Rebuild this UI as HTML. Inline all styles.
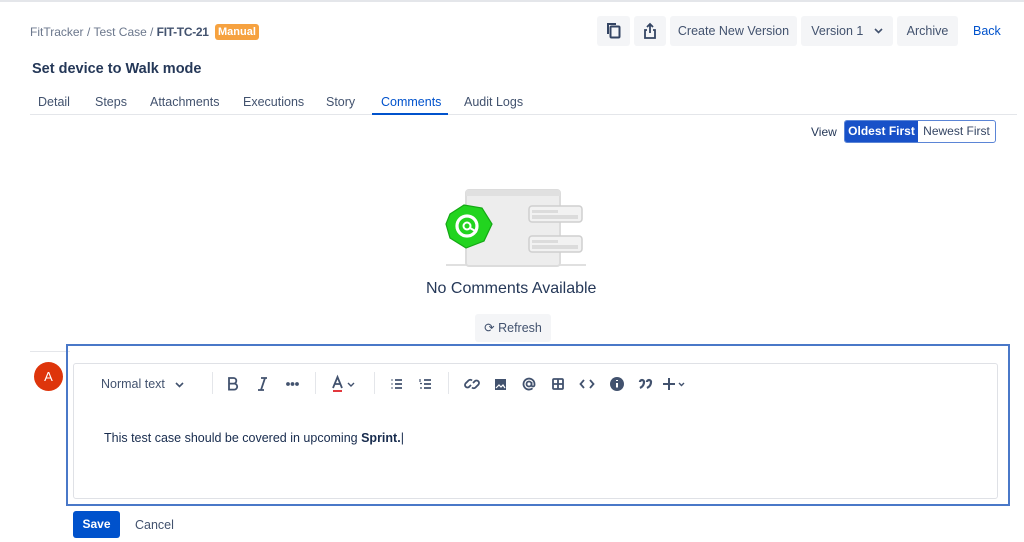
<!DOCTYPE html>
<html><head><meta charset="utf-8"><style>
*{margin:0;padding:0;box-sizing:border-box}
body{width:1024px;height:542px;background:#fff;font-family:"Liberation Sans",sans-serif;color:#42526e;position:relative;overflow:hidden;font-size:12px}
.a{position:absolute;white-space:nowrap}
.btn{position:absolute;background:#f4f5f7;border-radius:3px;height:30px;top:16px;font-size:12.5px;color:#42526e;display:flex;align-items:center;justify-content:center}
.tab{position:absolute;top:95px;font-size:12.5px;color:#42526e}
.ic{position:absolute;top:376px}
</style></head><body>
<div class="a" style="left:0;top:0;width:1024px;height:2px;background:#e4e6ea"></div>
<div class="a" style="left:30px;top:25px;font-size:12px;color:#6b778c">FitTracker</div>
<div class="a" style="left:87px;top:25px;font-size:12px;color:#6b778c">/ Test Case</div>
<div class="a" style="left:150px;top:25px;font-size:12px;color:#6b778c">/ <b style="color:#42526e;letter-spacing:-0.3px">FIT-TC-21</b></div>
<div class="a" style="left:215px;top:24px;background:#f6a240;color:#fff;font-weight:bold;font-size:11px;padding:2px 3px;border-radius:3px">Manual</div>
<div class="a" style="left:32px;top:61px;font-size:14.5px;font-weight:bold;color:#253858">Set device to Walk mode</div>
<div class="tab" style="left:38px">Detail</div>
<div class="tab" style="left:95px">Steps</div>
<div class="tab" style="left:150px">Attachments</div>
<div class="tab" style="left:243px">Executions</div>
<div class="tab" style="left:326px">Story</div>
<div class="tab" style="left:381px;color:#0052cc">Comments</div>
<div class="tab" style="left:464px">Audit Logs</div>
<div class="a" style="left:30px;top:114px;width:987px;height:1px;background:#e4e6ea"></div>
<div class="a" style="left:372px;top:113px;width:76px;height:2px;background:#0052cc"></div>

<div class="btn" style="left:597px;width:33px"><svg width="16" height="18" viewBox="0 0 16 18"><rect x="4.5" y="4.5" width="9" height="11" rx="1" fill="none" stroke="#344563" stroke-width="2"/><path d="M2 12V2h8" fill="none" stroke="#344563" stroke-width="2"/></svg></div>
<div class="btn" style="left:634px;width:32px"><svg width="16" height="18" viewBox="0 0 16 18"><path d="M5 8H3v8h10V8h-2M8 11V2M5 5l3-3 3 3" fill="none" stroke="#344563" stroke-width="1.8"/></svg></div>
<div class="btn" style="left:670px;width:127px">Create New Version</div>
<div class="btn" style="left:801px;width:92px">Version 1 &nbsp;&nbsp;<svg width="9" height="6"><path d="M1 1l3.5 3.5L8 1" fill="none" stroke="#42526e" stroke-width="1.6"/></svg></div>
<div class="btn" style="left:897px;width:61px">Archive</div>
<div class="a" style="left:973px;top:24px;font-size:12.5px;color:#0052cc">Back</div>

<div class="a" style="left:811px;top:125px;font-size:12px;color:#253858">View</div>
<div class="a" style="left:844px;top:120px;width:152px;height:23px;border:1px solid #5b85d6;border-radius:3px;overflow:hidden;display:flex;font-size:12px">
<div style="width:73px;background:#1851c8;color:#fff;font-weight:bold;text-align:center;line-height:21px">Oldest First</div>
<div style="flex:1;color:#344563;text-align:center;line-height:21px">Newest First</div></div>

<svg class="a" style="left:440px;top:186px" width="150" height="82" viewBox="0 0 150 82">
<rect x="6" y="78" width="140" height="2" fill="#e0e0e0"/>
<rect x="26" y="4" width="94" height="76" rx="3" fill="#ededed" stroke="#dcdcdc" stroke-width="2"/>
<rect x="26" y="4" width="94" height="6" fill="#e0e0e0"/>
<rect x="89" y="20" width="53" height="16" rx="3" fill="#f2f2f2" stroke="#cfcfcf" stroke-width="1.5"/>
<rect x="92" y="24" width="26" height="3" fill="#dcdcdc"/><rect x="92" y="29" width="46" height="4" fill="#dcdcdc"/>
<rect x="89" y="50" width="53" height="16" rx="3" fill="#f2f2f2" stroke="#cfcfcf" stroke-width="1.5"/>
<rect x="92" y="54" width="26" height="3" fill="#dcdcdc"/><rect x="92" y="59" width="46" height="4" fill="#dcdcdc"/>
<path d="M10 28L24 19 42 22 52 38 44 55 26 62 10 52 6 38z" fill="#22d41f" stroke="#14a814" stroke-width="1.2"/>
<circle cx="27" cy="40" r="10" fill="none" stroke="#fff" stroke-width="3.2"/>
<circle cx="27" cy="40" r="3.5" fill="none" stroke="#fff" stroke-width="2"/>
<path d="M30 42l7 4" stroke="#fff" stroke-width="2"/>
</svg>
<div class="a" style="left:426px;top:280px;font-size:16px;color:#253858">No Comments Available</div>
<div class="a" style="left:475px;top:314px;width:76px;height:28px;background:#f4f5f7;border-radius:3px;font-size:12.5px;line-height:28px;text-align:center">⟳ Refresh</div>

<div class="a" style="left:30px;top:351px;width:40px;height:1px;background:#e4e6ea"></div>
<div class="a" style="left:34px;top:362px;width:29px;height:29px;border-radius:50%;background:#de350b;color:#fff;font-size:13px;text-align:center;line-height:29px">A</div>
<div class="a" style="left:66px;top:344px;width:944px;height:162px;border:2px solid #4a78c8"></div>
<div class="a" style="left:73px;top:363px;width:925px;height:136px;border:1px solid #dfe1e6;border-radius:3px"></div>
<div class="a" style="left:101px;top:377px;font-size:12.5px;color:#42526e">Normal text &nbsp;&nbsp;<svg width="9" height="6"><path d="M1 1l3.5 3.5L8 1" fill="none" stroke="#42526e" stroke-width="1.6"/></svg></div>
<div class="a" style="left:212px;top:372px;width:1px;height:22px;background:#e4e6ea"></div>
<svg class="ic" style="left:222px;top:372px" width="480" height="24" viewBox="0 0 480 24" fill="none" stroke="#42526e" stroke-width="1.8">
<path d="M7 6h4.5a2.8 2.8 0 010 5.6H7zM7 11.6h5.2a3 3 0 010 6H7zM7 6v11.6"/>
<path d="M39 6h6M36 18h6M43 6l-4 12"/>
<circle cx="66" cy="12" r="1" fill="#42526e"/><circle cx="70.5" cy="12" r="1" fill="#42526e"/><circle cx="75" cy="12" r="1" fill="#42526e"/>
<path d="M111 16l4.5-11 4.5 11M113 12h5"/><path d="M111 19h9" stroke="#e2383d" stroke-width="2"/>
<path d="M126 11l3 3 3-3" stroke-width="1.4"/>
<path d="M173 8h7M173 12h7M173 16h7M169.5 8h1M169.5 12h1M169.5 16h1"/>
<path d="M202 8h7M202 12h7M202 16h7" /><path d="M198 7v3M198 11.5h2M198 16h2" stroke-width="1.2"/>
<path d="M249 13l-2 2a2.5 2.5 0 01-3.5-3.5l3-3a2.5 2.5 0 013.5 0M251 11l2-2a2.5 2.5 0 013.5 3.5l-3 3a2.5 2.5 0 01-3.5 0"/>
<rect x="273" y="7" width="11" height="11" fill="#42526e" stroke="none"/><path d="M274 16l3-3 2 2 2-2 2 3" stroke="#fff" stroke-width="1.2"/>
<circle cx="307" cy="12" r="2.5"/><path d="M309.5 10v3a1.5 1.5 0 003 0v-1a5.5 5.5 0 10-2 4.3"/>
<rect x="331" y="7" width="10" height="10" rx="1"/><path d="M336 7v10M331 12h10"/>
<path d="M362 8l-3.5 4 3.5 4M368 8l3.5 4-3.5 4"/>
<circle cx="395" cy="12" r="7" fill="#42526e" stroke="none"/><path d="M395 11v4.5M395 8v1" stroke="#fff" stroke-width="2"/>
<path d="M418 10a2 2 0 114 0c0 3-2 5-4 6M425 10a2 2 0 114 0c0 3-2 5-4 6" stroke-width="2.2"/>
<path d="M447 6v12M441 12h12" stroke-width="2"/>
<path d="M457 11l2.5 2.5 2.5-2.5" stroke-width="1.4"/>
</svg>
<div class="a" style="left:315px;top:372px;width:1px;height:22px;background:#e4e6ea"></div>
<div class="a" style="left:374px;top:372px;width:1px;height:22px;background:#e4e6ea"></div>
<div class="a" style="left:448px;top:372px;width:1px;height:22px;background:#e4e6ea"></div>
<div class="a" style="left:104px;top:431px;font-size:12.5px;color:#172b4d">This test case should be covered in upcoming <b>Sprint.</b>|</div>

<div class="a" style="left:73px;top:511px;width:47px;height:27px;background:#0052cc;border-radius:3px;color:#fff;font-weight:bold;font-size:12px;text-align:center;line-height:27px">Save</div>
<div class="a" style="left:135px;top:518px;font-size:12.5px;color:#42526e">Cancel</div>
</body></html>
